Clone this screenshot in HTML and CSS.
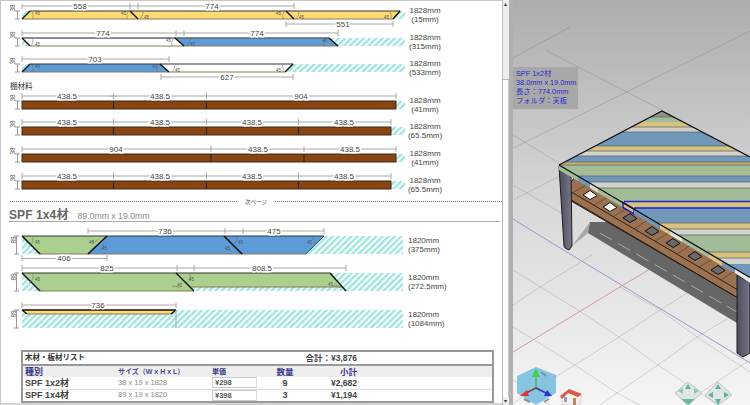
FILE: index.html
```html
<!DOCTYPE html>
<html lang="ja">
<head>
<meta charset="utf-8">
<title>Cut list</title>
<link rel="stylesheet" href="styles.css">
</head>
<body>
<div class="app">
<main class="sheet">

<div class="row r27">
<svg class="cut" width="408" height="27">
<defs>
<pattern id="hatch" width="4.4" height="4.4" patternUnits="userSpaceOnUse" patternTransform="rotate(45)"><rect width="4.4" height="4.4" fill="#fff"/><rect width="2.4" height="4.4" fill="#9fe6df"/></pattern>
</defs>
<text class="side" transform="translate(15 8) rotate(-90)">38</text>
<path class="brk" d="M15 11H20M15 19H20M17.5 11V19"/>
<rect class="hatch" x="22" y="11" width="383" height="8"/>
<polygon class="yellow" points="30,11 400,11 393,19 22,19"/>
<path class="top" d="M30 11H400"/><path class="bot" d="M22 19H393"/>
<path class="cutline" d="M22 19L30 11M130 11L138 19M286 11L294 19M393 19L400 11"/>
<path class="arc" d="M32 12Q34 15 33 19M128 12Q126 15 127 19M143 12Q143 16 140 19M284 12Q282 15 283 19M299 12Q299 16 296 19M390 12Q392 15 391 19"/>
<text class="a45" x="35" y="15">45</text><text class="a45" x="121" y="15">45</text><text class="a45" x="144" y="19">45</text><text class="a45" x="276" y="15">45</text><text class="a45" x="299" y="19">45</text><text class="a45" x="384" y="19">45</text>
<path class="dim" d="M22 6H130M22 4V9M130 3V9M138 3V9M130 6H138M138 6H294M294 3V9M286 24H393M286 21V27M393 21V27"/>
<text class="num" x="80" y="9">558</text><text class="num" x="212" y="9">774</text><text class="num" x="343" y="27">551</text>
</svg>
<div class="stock"><span>1828mm</span><span>(15mm)</span></div>
</div>

<div class="row r26">
<svg class="cut" width="408" height="26">
<text class="side" transform="translate(15 8) rotate(-90)">38</text>
<path class="brk" d="M15 11H20M15 19H20M17.5 11V19"/>
<rect class="hatch" x="22" y="11" width="383" height="8"/>
<polygon class="white" points="22,11 175,11 184,19 30,19"/>
<polygon class="blue" points="175,11 329,11 338,19 184,19"/>
<path class="top thick" d="M22 11H329"/><path class="bot" d="M30 19H338"/>
<path class="cutline" d="M22 11L30 19M175 11L184 19M329 11L338 19"/>
<path class="arc" d="M33 12Q33 16 31 19M173 12Q171 15 172 19M190 12Q190 16 187 19M326 12Q323 15 324 19"/>
<text class="a45" x="35" y="19">45</text><text class="a45" x="166" y="15">45</text><text class="a45" x="190" y="19">45</text><text class="a45" x="322" y="15">45</text>
<path class="dim" d="M22 6H176M22 3V9M176 3V9M176 6H184M184 3V9M184 6H338M338 3V9"/>
<text class="num" x="103" y="9">774</text><text class="num" x="257" y="9">774</text>
</svg>
<div class="stock"><span>1828mm</span><span>(315mm)</span></div>
</div>

<div class="row r27">
<svg class="cut" width="408" height="27">
<text class="side" transform="translate(15 8) rotate(-90)">38</text>
<path class="brk" d="M15 11H20M15 19H20M17.5 11V19"/>
<rect class="hatch" x="22" y="11" width="383" height="8"/>
<polygon class="blue" points="30,11 160,11 169,19 22,19"/>
<polygon class="white" points="160,11 293,11 285,19 169,19"/>
<path class="top" d="M30 11H293"/><path class="bot" d="M22 19H285"/>
<path class="cutline" d="M22 19L30 11M160 11L169 19M285 19L293 11"/>
<path class="arc" d="M32 12Q34 15 33 19M158 12Q156 15 157 19M175 12Q175 16 172 19M282 12Q284 15 283 19"/>
<text class="a45" x="35" y="15">45</text><text class="a45" x="152" y="15">45</text><text class="a45" x="175" y="19">45</text><text class="a45" x="276" y="19">45</text>
<path class="dim" d="M22 6H169M22 3V9M169 3V9M161 24H293M161 21V27M293 21V27"/>
<text class="num" x="95" y="9">703</text><text class="num" x="227" y="27">627</text>
</svg>
<div class="stock"><span>1828mm</span><span>(533mm)</span></div>
</div>

<h3 class="sub">棚材料</h3>

<div class="row r26">
<svg class="cut" width="408" height="26">
<text class="side" transform="translate(15 8) rotate(-90)">38</text>
<path class="brk" d="M15 11H20M15 19H20M17.5 11V19"/>
<rect class="hatch" x="396" y="11" width="9" height="8"/>
<rect class="brown" x="22" y="11" width="374" height="8"/>
<path class="sep" d="M113.5 11V19M206.5 11V19"/>
<path class="dim" d="M22 6H396M22 3V9M113.5 3V9M110 6H117M206.5 3V9M396 3V9"/>
<text class="num" x="67" y="9">438.5</text><text class="num" x="160" y="9">438.5</text><text class="num" x="301" y="9">904</text>
</svg>
<div class="stock"><span>1828mm</span><span>(41mm)</span></div>
</div>

<div class="row r27">
<svg class="cut" width="408" height="27">
<text class="side" transform="translate(15 8) rotate(-90)">38</text>
<path class="brk" d="M15 11H20M15 19H20M17.5 11V19"/>
<rect class="hatch" x="391" y="11" width="14" height="8"/>
<rect class="brown" x="22" y="11" width="369" height="8"/>
<path class="sep" d="M113.5 11V19M206.5 11V19M298.5 11V19"/>
<path class="dim" d="M22 6H391M22 3V9M113.5 3V9M206.5 3V9M298.5 3V9M391 3V9"/>
<text class="num" x="67" y="9">438.5</text><text class="num" x="160" y="9">438.5</text><text class="num" x="252" y="9">438.5</text><text class="num" x="344" y="9">438.5</text>
</svg>
<div class="stock"><span>1828mm</span><span>(65.5mm)</span></div>
</div>

<div class="row r27">
<svg class="cut" width="408" height="27">
<text class="side" transform="translate(15 8) rotate(-90)">38</text>
<path class="brk" d="M15 11H20M15 19H20M17.5 11V19"/>
<rect class="hatch" x="396" y="11" width="9" height="8"/>
<rect class="brown" x="22" y="11" width="374" height="8"/>
<path class="sep" d="M211 11V19M304 11V19"/>
<path class="dim" d="M22 6H396M22 3V9M211 3V9M304 3V9M396 3V9"/>
<text class="num" x="116" y="9">904</text><text class="num" x="258" y="9">438.5</text><text class="num" x="350" y="9">438.5</text>
</svg>
<div class="stock"><span>1828mm</span><span>(41mm)</span></div>
</div>

<div class="row r20">
<svg class="cut" width="408" height="20">
<text class="side" transform="translate(15 8) rotate(-90)">38</text>
<path class="brk" d="M15 11H20M15 19H20M17.5 11V19"/>
<rect class="hatch" x="391" y="11" width="14" height="8"/>
<rect class="brown" x="22" y="11" width="369" height="8"/>
<path class="sep" d="M113.5 11V19M206.5 11V19M298.5 11V19"/>
<path class="dim" d="M22 6H391M22 3V9M113.5 3V9M206.5 3V9M298.5 3V9M391 3V9"/>
<text class="num" x="67" y="9">438.5</text><text class="num" x="160" y="9">438.5</text><text class="num" x="252" y="9">438.5</text><text class="num" x="344" y="9">438.5</text>
</svg>
<div class="stock"><span>1828mm</span><span>(65.5mm)</span></div>
</div>

<div class="pagebreak"><i></i><span>次ページ</span><i></i></div>

<h2 class="section"><b>SPF 1x4材</b><small>89.0mm x 19.0mm</small></h2>

<div class="row r37">
<svg class="cut" width="408" height="37">
<text class="side" transform="translate(16 15) rotate(-90)">89</text>
<path class="brk" d="M14 11H19M14 29H19M16.5 11V29"/>
<rect class="hatch" x="306" y="11" width="97" height="18"/>
<polygon class="hatch" points="22,11 40,29 22,29"/>
<polygon class="green" points="22,11 107,11 88,29 40,29"/>
<polygon class="blue" points="107,11 324,11 306,29 88,29"/>
<path class="top" d="M22 11H324"/><path class="bot" d="M40 29H306"/>
<path class="cutline thick" d="M22 11L40 29M107 11L88 29M224 11L242 29"/>
<path class="cutline thin" d="M324 11L306 29"/>
<path class="arc" d="M33 12Q34 18 29 21M90 17Q95 18 99 14M100 25Q105 24 103 19M237 12Q238 17 233 20M226 24Q230 24 232 27M312 12Q316 15 315 20"/>
<text class="a45" x="35" y="19">45</text><text class="a45" x="89" y="19">45</text><text class="a45" x="102" y="25">45</text><text class="a45" x="238" y="19">45</text><text class="a45" x="225" y="25">45</text><text class="a45" x="307" y="19">45</text>
<path class="dim" d="M88 6H225M88 3V9M225 3V9M225 6H243M243 3V9M243 6H324M324 3V9M22 33.500H107M22 30V36M107 30V36"/>
<text class="num" x="165" y="9">736</text><text class="num" x="274" y="9">475</text><text class="num" x="64" y="36">406</text>
</svg>
<div class="stock wide"><span>1820mm</span><span>(375mm)</span></div>
</div>

<div class="row r37">
<svg class="cut" width="408" height="37">
<text class="side" transform="translate(16 15) rotate(-90)">89</text>
<path class="brk" d="M14 11H19M14 29H19M16.5 11V29"/>
<rect class="hatch" x="22" y="11" width="381" height="18"/>
<polygon class="green" points="22,11 176,11 194,29 40,29"/>
<polygon class="green" points="176,11 330,11 342,25 190,25"/>
<path class="top" d="M22 11H330"/><path class="bot" d="M40 29H194M190 25H342"/>
<path class="cutline" d="M22 11L40 29M176 11L194 29M330 11L346 29"/>
<path class="arc" d="M33 12Q34 18 29 21M190 12Q191 18 187 21M172 24Q178 24 180 26M333 24Q338 22 340 26"/>
<text class="a45" x="35" y="19">45</text><text class="a45" x="189" y="19">45</text><text class="a45" x="177" y="25">45</text><text class="a45" x="328" y="24">45</text>
<path class="dim" d="M22 6H177M22 3V9M177 3V9M177 6H194M194 3V9M194 6H346M346 3V9"/>
<text class="num" x="107" y="9">825</text><text class="num" x="262" y="9">808.5</text>
</svg>
<div class="stock wide"><span>1820mm</span><span>(272.5mm)</span></div>
</div>

<div class="row r30">
<svg class="cut" width="408" height="30">
<text class="side" transform="translate(16 15) rotate(-90)">89</text>
<path class="brk" d="M14 11H19M14 29H19M16.5 11V29"/>
<rect class="hatch" x="22" y="11" width="381" height="18"/>
<polygon class="yellow" points="22,11 176,11 171,15 27,15"/>
<path class="cutline" d="M22 11H176M22 11L27 15M176 11L171 15"/>
<path class="bot" d="M27 15H171"/>
<path class="dim" d="M22 6H176M22 3V9M176 3V9M176 11V29"/>
<text class="num" x="98" y="9">736</text>
</svg>
<div class="stock wide"><span>1820mm</span><span>(1084mm)</span></div>
</div>

<table class="list">
<colgroup><col class="c1"><col class="c2"><col class="c3"><col class="c4"><col class="c5"><col></colgroup>
<tr class="title"><td colspan="3">木材・板材リスト</td><td colspan="2" class="total">合計：¥3,876</td><td></td></tr>
<tr class="head"><th class="kind">種別</th><th class="size">サイズ（W x H x L）</th><th class="price">単価</th><th class="qty">数量</th><th class="sub-h">小計</th><th></th></tr>
<tr class="item"><td class="kind">SPF 1x2材</td><td class="size">38 x 19 x 1828</td><td><span class="unit">¥298</span></td><td class="qty">9</td><td class="amount">¥2,682</td><td></td></tr>
<tr class="item"><td class="kind">SPF 1x4材</td><td class="size">89 x 19 x 1820</td><td><span class="unit">¥398</span></td><td class="qty">3</td><td class="amount">¥1,194</td><td></td></tr>
</table>
</main>

<div class="scroll"><i class="btn">▴</i><i class="thumb"></i><i class="btn">▾</i></div>

<section class="viewport">
<svg class="scene" width="237" height="405" viewBox="513 0 237 405">
<defs>
<linearGradient id="floor" x1="0" y1="0" x2="0" y2="1"><stop offset="0" stop-color="#adadad"/><stop offset=".3" stop-color="#c6c6c6"/><stop offset=".5" stop-color="#d8d8d8"/><stop offset=".75" stop-color="#e6e6e6"/><stop offset="1" stop-color="#f5f5f5"/></linearGradient>
<clipPath id="topclip"><polygon points="662,111 559,165 750,277.500 750,157"/></clipPath>
<linearGradient id="leg" x1="0" y1="0" x2="1" y2="0"><stop offset="0" stop-color="#4c4c5c"/><stop offset="1" stop-color="#777787"/></linearGradient>
</defs>
<rect x="513" y="0" width="237" height="405" fill="url(#floor)"/>
<path class="grid" d="M513 58L570 27M545 50L662 110M513 148L712 50L750 31M513 135L562 165M513 185L570 218M513 200L562 175M513 270L578 310L619 337L658 365L700 393L718 405M513 327L575 365L617 393L640 405M620 287L660 310L697 337L750 372M513 305L540 287L592 255M513 403L575 365L619 337L660 310L700 285M600 405L617 393L658 365L697 337L750 305M700 393L742 365L750 360M513 380L550 405"/>
<path class="axis-b" d="M513 219L547 240L737 355L750 363"/>
<path class="axis-r" d="M513 352L620 287L660 263"/>
<polygon points="572,246 590,222 588,233" fill="#a8a8a8"/>
<polygon points="590,222 610,222 737,290 737,323 588,233" fill="#666"/>
<path class="dash" d="M600 233L737 312"/>
<polygon class="rail" points="566,170 745,276 745,302 566,198"/>
<path class="railline" d="M568 190L738 290M568 198L738 298"/>
<path class="railline thin" d="M608 197L594 205M627 208L613 217M648 220L634 229M669 233L655 241M691 245L677 254M713 259L699 267M735 271L721 280M586 185L572 193"/>
<g class="holes">
<polygon class="open" points="566,172 574,178 569,185 566,184"/>
<polygon class="open" points="583,195 590,190.500 597,195.500 590,199.500"/>
<polygon class="open" points="603,207 610,202.500 617,207.500 610,211.500"/>
<polygon points="623,218 630,213.500 637,218.500 630,222.500"/>
<polygon points="645,231 652,226.500 659,231.500 652,235.500"/>
<polygon points="666,243 673,238.500 680,243.500 673,247.500"/>
<polygon points="688,256 695,251.500 702,256.500 695,260.500"/>
<polygon points="711,270 718,265.500 725,270.500 718,274.500"/>
</g>
<polygon class="legshape" points="559,166 571,172 572,246 569,250 565,248 564,246"/>
<polygon class="legshape" points="737,275 750,283 750,353 743,357 737,353"/>
<g clip-path="url(#topclip)">
<rect x="513" y="105" width="237" height="12" fill="#8f9290"/>
<rect x="513" y="117" width="237" height="5" fill="#a2bc98"/>
<rect x="513" y="122" width="237" height="5" fill="#d6c37f"/>
<rect x="513" y="127" width="237" height="5" fill="#cfcfca"/>
<rect x="513" y="132" width="237" height="14" fill="#7198bb"/>
<rect x="513" y="146" width="237" height="5" fill="#d6c37f"/>
<rect x="513" y="151" width="237" height="5" fill="#d2d2ce"/>
<rect x="513" y="156" width="237" height="6" fill="#7198bb"/>
<rect x="513" y="162" width="237" height="3" fill="#c4ae6c"/>
<rect x="513" y="165" width="237" height="11" fill="#a2bc98"/>
<rect x="513" y="176" width="237" height="6" fill="#7198bb"/>
<rect x="513" y="182" width="237" height="6" fill="#d2d2ce"/>
<rect x="513" y="188" width="237" height="13" fill="#a2bc98"/>
<rect x="513" y="201" width="237" height="7" fill="#d6c37f"/>
<rect x="513" y="208" width="237" height="15" fill="#7198bb"/>
<rect x="513" y="223" width="237" height="6" fill="#d6c37f"/>
<rect x="513" y="229" width="237" height="6" fill="#d2d2ce"/>
<rect x="513" y="235" width="237" height="17" fill="#a2bc98"/>
<rect x="513" y="252" width="237" height="6" fill="#d6c37f"/>
<rect x="513" y="258" width="237" height="6" fill="#d2d2ce"/>
<rect x="513" y="264" width="237" height="20" fill="#7198bb"/>
<path class="seams" d="M513 117H750M513 127H750M513 132H750M513 146H750M513 151H750M513 156H750M513 162H750M513 165H750M513 176H750M513 182H750M513 188H750M513 223H750M513 229H750M513 235H750M513 252H750M513 258H750"/>
<path class="select" d="M624 201.500H750M634 208H750"/>
</g>
<g class="fringe">
<polygon fill="#a2bc98" points="559,165 578,176 578,181 559,170"/>
<polygon fill="#7198bb" points="578,176 590,183 590,188 578,181"/>
<polygon fill="#d8d8d4" points="590,183 598,188 598,193 590,188"/>
<polygon fill="#a2bc98" points="598,188 623,202.500 623,207.500 598,193"/>
<polygon fill="#d6c37f" stroke="#2020d0" stroke-width="1.500" points="623,202.500 634,209 634,214 623,207.500"/>
<polygon fill="#7198bb" points="634,209 660,224 660,229 634,214"/>
<polygon fill="#d6c37f" points="660,224 670,230 670,235 660,229"/>
<polygon fill="#e4e4e0" points="670,230 682,237 682,242 670,235"/>
<polygon fill="#a2bc98" points="682,237 709,253 709,258 682,242"/>
<polygon fill="#d6c37f" points="709,253 722,261 722,266 709,258"/>
<polygon fill="#7198bb" points="722,261 735,268 735,273 722,266"/>
<polygon fill="#e8e8e6" points="735,268 750,277.500 750,283 735,273"/>
</g>
<path class="outline" d="M559 165L662 111L750 157M559 165L750 277.500"/>
<g class="gizmo">
<polygon points="536,367 556,375 556,393 536,405 517,393 517,376" fill="#86c4e2"/>
<path d="M536 388V374" stroke="#3fc04a" stroke-width="1.500"/><polygon points="536,368 540,377 532,377" fill="#3fd050"/>
<path d="M536 388L526 393" stroke="#a33" stroke-width="1.500"/><polygon points="520,396 527,390 529,396" fill="#e0352a"/>
<path d="M536 388L546 393" stroke="#33a" stroke-width="1.500"/><polygon points="552,396 544,396 547,390" fill="#2a35d8"/>
<path d="M541 372L546 376M524 399L530 402M544 402L549 399" stroke="#8a8f94" stroke-width="2"/>
</g>
<g class="house">
<polygon points="562,399 570,390 582,396 580,405 562,405" fill="#f4efe9" stroke="#c9b9a9" stroke-width=".5"/>
<polygon points="560,396 569,389 582,394 578,397 568,393 562,399" fill="#d9574f"/>
<rect x="564" y="397" width="3" height="5" fill="#7fa6d6"/>
<rect x="573" y="398" width="3" height="7" fill="#b98560"/>
</g>
<g class="nav">
<polygon points="688,382 702,393 688,405 675,393" fill="#dfe6e4" stroke="#a9b4b2" stroke-width=".7"/>
<polygon points="681,399 695,399 688,405" fill="#6fb5a9"/>
<polygon points="688,384 691,389 685,389" fill="#5fb0a8"/>
<polygon points="678,391 683,388 683,394" fill="#8fc4bc"/>
<polygon points="699,391 694,388 694,394" fill="#8fc4bc"/>
<polygon points="718,382 732,395 718,405 705,395" fill="#dfe6e4" stroke="#a9b4b2" stroke-width=".7"/>
<polygon points="718,384 721,389 715,389" fill="#5fb0a8"/>
<polygon points="718,405 721,399 715,399" fill="#5fb0a8"/>
<polygon points="708,395 713,392 713,398" fill="#5fb0a8"/>
<polygon points="729,395 724,392 724,398" fill="#5fb0a8"/>
</g>
</svg>
<div class="info"><span>SPF 1x2材</span><span>38.0mm x 19.0mm</span><span>長さ：774.0mm</span><span>フォルダ：天板</span></div>
</section>
</div>
</body>
</html>
```
FILE: styles.css
```css
* { box-sizing: border-box; }
html, body { margin: 0; padding: 0; background: #fff; }
body { font-family: "Liberation Sans", "Noto Sans CJK JP", sans-serif; color: #333; }
.app { display: flex; width: 750px; height: 405px; overflow: hidden; }

.sheet { width: 502px; height: 405px; flex: none; background: #fff; box-shadow: inset 1px 1px 0 #c8c8c8, inset 0 -2px 0 #d4d4d4; overflow: hidden; }
.row { display: flex; align-items: flex-start; }
.r20 { height: 20px; }
.r26 { height: 26px; }
.r27 { height: 27px; }
.r30 { height: 30px; }
.r37 { height: 37px; }
.cut { flex: none; display: block; overflow: visible; }

.stock { width: 34px; margin-top: 6px; display: flex; flex-direction: column; align-items: center; font-size: 8px; line-height: 9px; color: #444; white-space: nowrap; }
.stock.wide { margin-top: 11px; align-items: flex-start; }

.side { font: 6.5px "Liberation Sans", sans-serif; fill: #555; text-anchor: middle; }
.brk { stroke: #999; stroke-width: 1; fill: none; }
.hatch { fill: url(#hatch); }
.yellow { fill: #fddb72; }
.white { fill: #fff; }
.blue { fill: #5d9bd8; }
.green { fill: #a9d08e; }
.brown { fill: #8a4412; stroke: #3a2a1c; stroke-width: 1; }
.top { stroke: #333; stroke-width: 1; fill: none; }
.top.thick { stroke: #666; stroke-width: 1.5; }
.bot { stroke: #857a5a; stroke-width: 1; fill: none; }
.cutline { stroke: #111; stroke-width: 1.4; fill: none; }
.cutline.thick { stroke-width: 1.6; }
.cutline.thin { stroke-width: .7; }
.sep { stroke: #2a2a2a; stroke-width: 1.2; fill: none; }
.arc { stroke: #666; stroke-width: .5; fill: none; }
.a45 { font: 4.5px "Liberation Sans", sans-serif; fill: #555; }
.dim { stroke: #a8a8a8; stroke-width: 1; fill: none; }
.num { font: 8px "Liberation Sans", sans-serif; fill: #444; text-anchor: middle; paint-order: stroke; stroke: #fff; stroke-width: 3px; }

.sub { margin: 0 0 0 10px; height: 10px; font-size: 7.500px; line-height: 14px; font-weight: 400; color: #333; }
.pagebreak { height: 20px; padding: 9px 0 0 10px; display: flex; align-items: flex-start; font-size: 5.500px; line-height: 6px; color: #555; }
.pagebreak i { flex: 1; border-top: 1px dotted #666; margin-top: 2px; }
.pagebreak span { width: 38px; text-align: center; }
.section { margin: 0 2px 3px 9px; height: 12px; display: flex; align-items: baseline; gap: 9px; border-bottom: 1px solid #aaa; font-size: 12px; line-height: 11px; font-weight: 400; color: #666; }
.section b { font-weight: 700; letter-spacing: .1px; }
.section small { font-size: 8.700px; color: #888; }

.list { margin: 21px 0 0 21px; width: 473px; height: 51px; border-collapse: collapse; table-layout: fixed; border: 2px solid #999; font-size: 8px; line-height: 10px; }
.list td, .list th { padding: 0; line-height: 10px; white-space: nowrap; overflow: hidden; }
.c1 { width: 96px; }
.c2 { width: 94px; }
.c3 { width: 50px; }
.c4 { width: 46px; }
.c5 { width: 49px; }
.title { height: 14px; border-bottom: 2px solid #999; }
.title td { font-size: 7.500px; font-weight: 700; color: #333; padding-left: 2px; }
.title .total { text-align: right; font-size: 8.500px; color: #444; }
.head { height: 12px; background: #eee; color: #3b3b8a; }
.head th { font-weight: 700; text-align: left; }
.kind { padding-left: 2px !important; font-weight: 700; font-size: 9px; color: #444; }
.head .kind { color: #3b3b8a; }
.size { font-size: 7.500px; color: #888; }
.head .size { font-size: 7px; color: #4a4a8a; }
.head .price { font-size: 7px; }
.qty { text-align: center !important; font-weight: 700; font-size: 9px; color: #444; }
.head .qty { color: #3b3b8a; font-size: 8.500px; }
.sub-h { text-align: right !important; font-size: 8.500px; }
.amount { text-align: right; font-weight: 700; font-size: 8.500px; color: #444; }
.item { height: 12px; border-bottom: 1px solid #ddd; }
.unit { display: block; width: 45px; height: 11px; border: 1px solid #ccc; border-right-color: #ddd; font-size: 7.500px; font-weight: 700; line-height: 9px; padding-left: 2px; color: #555; background: #fff; }

.scroll { width: 7px; flex: none; display: flex; flex-direction: column; background: #eee; box-shadow: inset 1px 0 0 #bbb; }
.btn { height: 8px; flex: none; font-style: normal; font-size: 6px; line-height: 8px; text-align: center; color: #333; }
.thumb { flex: 1; margin-top: 71px; background: #fff; box-shadow: inset 1px 0 0 #bbb, inset 0 1px 0 #bbb, inset -1px 0 0 #ccc; }

.viewport { position: relative; width: 241px; flex: none; background: #b0b0b0; padding-left: 4px; }
.scene { display: block; }
.grid { stroke: rgba(0, 0, 0, .13); stroke-width: 1; fill: none; }
.axis-b { stroke: #9a9ad0; stroke-width: 1; fill: none; }
.axis-r { stroke: #d89a9a; stroke-width: 1; fill: none; }
.dash { stroke: #a8a8a8; stroke-width: 1; stroke-dasharray: 14 7; fill: none; }
.rail { fill: #9c7150; stroke: #1c1c1c; stroke-width: 1; }
.railline { stroke: #2a2018; stroke-width: 1; fill: none; }
.railline.thin { stroke: #5a3f2a; stroke-width: .7; }
.holes polygon { stroke: #111; stroke-width: 1; fill: #6a6a6e; }
.holes polygon.open { fill: #fff; }
.legshape { fill: url(#leg); stroke: #1c1c1c; stroke-width: 1; }
.seams { stroke: #5c5f60; stroke-width: .7; fill: none; }
.select { stroke: #2020d0; stroke-width: 1.500; fill: none; }
.outline { stroke: #111; stroke-width: 1.300; fill: none; }

.info { position: absolute; left: 4px; top: 67px; width: 65px; height: 42px; padding: 2px 0 0 3px; background: #a8a8a8; display: flex; flex-direction: column; font-size: 7.300px; line-height: 9px; color: #2a2ad0; white-space: nowrap; }
```
